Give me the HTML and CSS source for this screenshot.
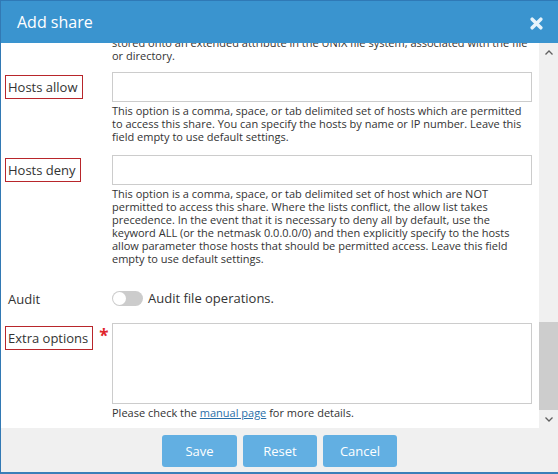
FILE: index.html
```html
<!DOCTYPE html>
<html lang="en">
<head>
<meta charset="utf-8">
<title>Add share</title>
<link rel="stylesheet" href="styles.css">
</head>
<body>
<div class="dialog">
  <div class="header">
    <span class="title">Add share</span>
    <svg class="close" width="12" height="12" viewBox="0 0 12 12"><path d="M2 2 L10 10 M10 2 L2 10" stroke="#e6f3fb" stroke-width="3.2" stroke-linecap="round"/></svg>
  </div>
  <div class="body">
    <div class="viewport">
      <div class="row row-top">
        <div class="label-col"></div>
        <div class="field-col">
          <p class="help">stored onto an extended attribute in the UNIX file system, associated with the file or directory.</p>
        </div>
      </div>
      <div class="row">
        <div class="label-col"><span class="label marked">Hosts allow</span></div>
        <div class="field-col">
          <input class="input" type="text">
          <p class="help">This option is a comma, space, or tab delimited set of hosts which are permitted to access this share. You can specify the hosts by name or IP number. Leave this field empty to use default settings.</p>
        </div>
      </div>
      <div class="row row-deny">
        <div class="label-col"><span class="label marked">Hosts deny</span></div>
        <div class="field-col">
          <input class="input" type="text">
          <p class="help">This option is a comma, space, or tab delimited set of host which are NOT permitted to access this share. Where the lists conflict, the allow list takes precedence. In the event that it is necessary to deny all by default, use the keyword ALL (or the netmask 0.0.0.0/0) and then explicitly specify to the hosts allow parameter those hosts that should be permitted access. Leave this field empty to use default settings.</p>
        </div>
      </div>
      <div class="row row-audit">
        <div class="label-col"><span class="label">Audit</span></div>
        <div class="field-col check">
          <span class="toggle"><span class="knob"></span></span>
          <span class="check-text">Audit file operations.</span>
        </div>
      </div>
      <div class="row">
        <div class="label-col"><span class="label marked">Extra options</span><span class="req">*</span></div>
        <div class="field-col">
          <textarea class="textarea"></textarea>
          <p class="help">Please check the <a class="link" href="#">manual page</a> for more details.</p>
        </div>
      </div>
    </div>
    <div class="scrollbar">
      <div class="sb-btn"><svg width="8" height="5" viewBox="0 0 8 5"><path d="M0.5 4.5 L4 1 L7.5 4.5" fill="none" stroke="#606060" stroke-width="1.3"/></svg></div>
      <div class="sb-track">
        <div class="sb-space"></div>
        <div class="sb-thumb"></div>
      </div>
      <div class="sb-btn"><svg width="8" height="5" viewBox="0 0 8 5"><path d="M0.5 0.5 L4 4 L7.5 0.5" fill="none" stroke="#606060" stroke-width="1.3"/></svg></div>
    </div>
  </div>
  <div class="footer">
    <button class="btn btn-save">Save</button>
    <button class="btn">Reset</button>
    <button class="btn">Cancel</button>
  </div>
</div>
</body>
</html>
```
FILE: styles.css
```css
html, body {
  margin: 0;
  padding: 0;
}
body {
  width: 558px;
  height: 474px;
  overflow: hidden;
  font-family: "Open Sans", "DejaVu Sans", sans-serif;
  color: #333;
  background: #fff;
}
.dialog {
  box-sizing: border-box;
  width: 558px;
  height: 474px;
  border-top: 1px solid #2f79b6;
  border-left: 1px solid #3279b4;
  border-bottom: 2px solid #3a7fb8;
  display: flex;
  flex-direction: column;
}
.header {
  height: 42px;
  flex: none;
  background: #3a94cf;
  display: flex;
  align-items: center;
  justify-content: space-between;
  padding: 0 15px 0 16px;
}
.title {
  color: #fff;
  font-size: 16px;
  line-height: 20px;
}
.close {
  display: block;
  margin-top: 2px;
  width: 13px;
  height: 13px;
}
.body {
  height: 385px;
  flex: none;
  display: flex;
}
.viewport {
  flex: 1;
  overflow: hidden;
  padding-left: 4px;
}
.row {
  display: grid;
  grid-template-columns: 107px 420px;
  margin-top: 10px;
}
.row-top {
  margin-top: -7px;
}
.row-deny {
  margin-top: 12px;
}
.row-audit {
  margin-top: 18px;
  height: 30px;
}
.label-col {
  display: flex;
  align-items: flex-start;
}
.label {
  display: inline-block;
  border: 1px solid transparent;
  padding: 2px 4px 2px 2px;
  margin-top: 3px;
  font-size: 13px;
  line-height: 18px;
  color: #333;
  white-space: nowrap;
}
.row-audit .label {
  margin-top: 4px;
}
.marked {
  border-color: #b8262b;
}
.req {
  color: #e0242c;
  font-size: 17px;
  line-height: 17px;
  margin-left: 6px;
  margin-top: 4px;
  font-weight: bold;
}
.field-col {
  min-width: 0;
}
.input {
  display: block;
  box-sizing: border-box;
  width: 420px;
  height: 30px;
  margin: 0;
  border: 1px solid #cccccc;
  background: #fff;
}
.textarea {
  display: block;
  box-sizing: border-box;
  width: 420px;
  height: 81px;
  margin: 0;
  border: 1px solid #cccccc;
  background: #fff;
  resize: none;
}
.help {
  margin: 2px 0 0 0;
  font-size: 11px;
  line-height: 13px;
  color: #333;
}
.row-top .help {
  margin-top: 0;
}
.link {
  color: #2a6fa8;
  text-decoration: underline;
}
.check {
  display: flex;
  align-items: center;
  height: 30px;
}
.toggle {
  box-sizing: border-box;
  width: 31px;
  height: 15px;
  border-radius: 8px;
  background: #cccccc;
  display: flex;
  align-items: center;
  padding-left: 1px;
}
.knob {
  width: 13px;
  height: 13px;
  border-radius: 50%;
  background: #fff;
}
.check-text {
  margin-left: 5px;
  font-size: 13px;
  line-height: 18px;
}
.scrollbar {
  width: 19px;
  flex: none;
  background: #f0f0f0;
  display: flex;
  flex-direction: column;
}
.sb-btn {
  height: 18px;
  flex: none;
  display: flex;
  align-items: center;
  justify-content: center;
}
.sb-track {
  flex: 1;
  display: flex;
  flex-direction: column;
}
.sb-space {
  flex: 1;
}
.sb-thumb {
  height: 88px;
  background: #cdcdcd;
}
.footer {
  flex: 1;
  background: #f0f0f0;
  display: flex;
  justify-content: center;
  align-items: flex-start;
  gap: 6px;
  padding-top: 7px;
}
.btn {
  width: 74px;
  height: 32px;
  border: none;
  border-radius: 3px;
  background: #62afe2;
  color: #fff;
  font-family: "Open Sans", "DejaVu Sans", sans-serif;
  font-size: 13px;
  padding: 0;
}
.btn-save {
  width: 75px;
}
```
